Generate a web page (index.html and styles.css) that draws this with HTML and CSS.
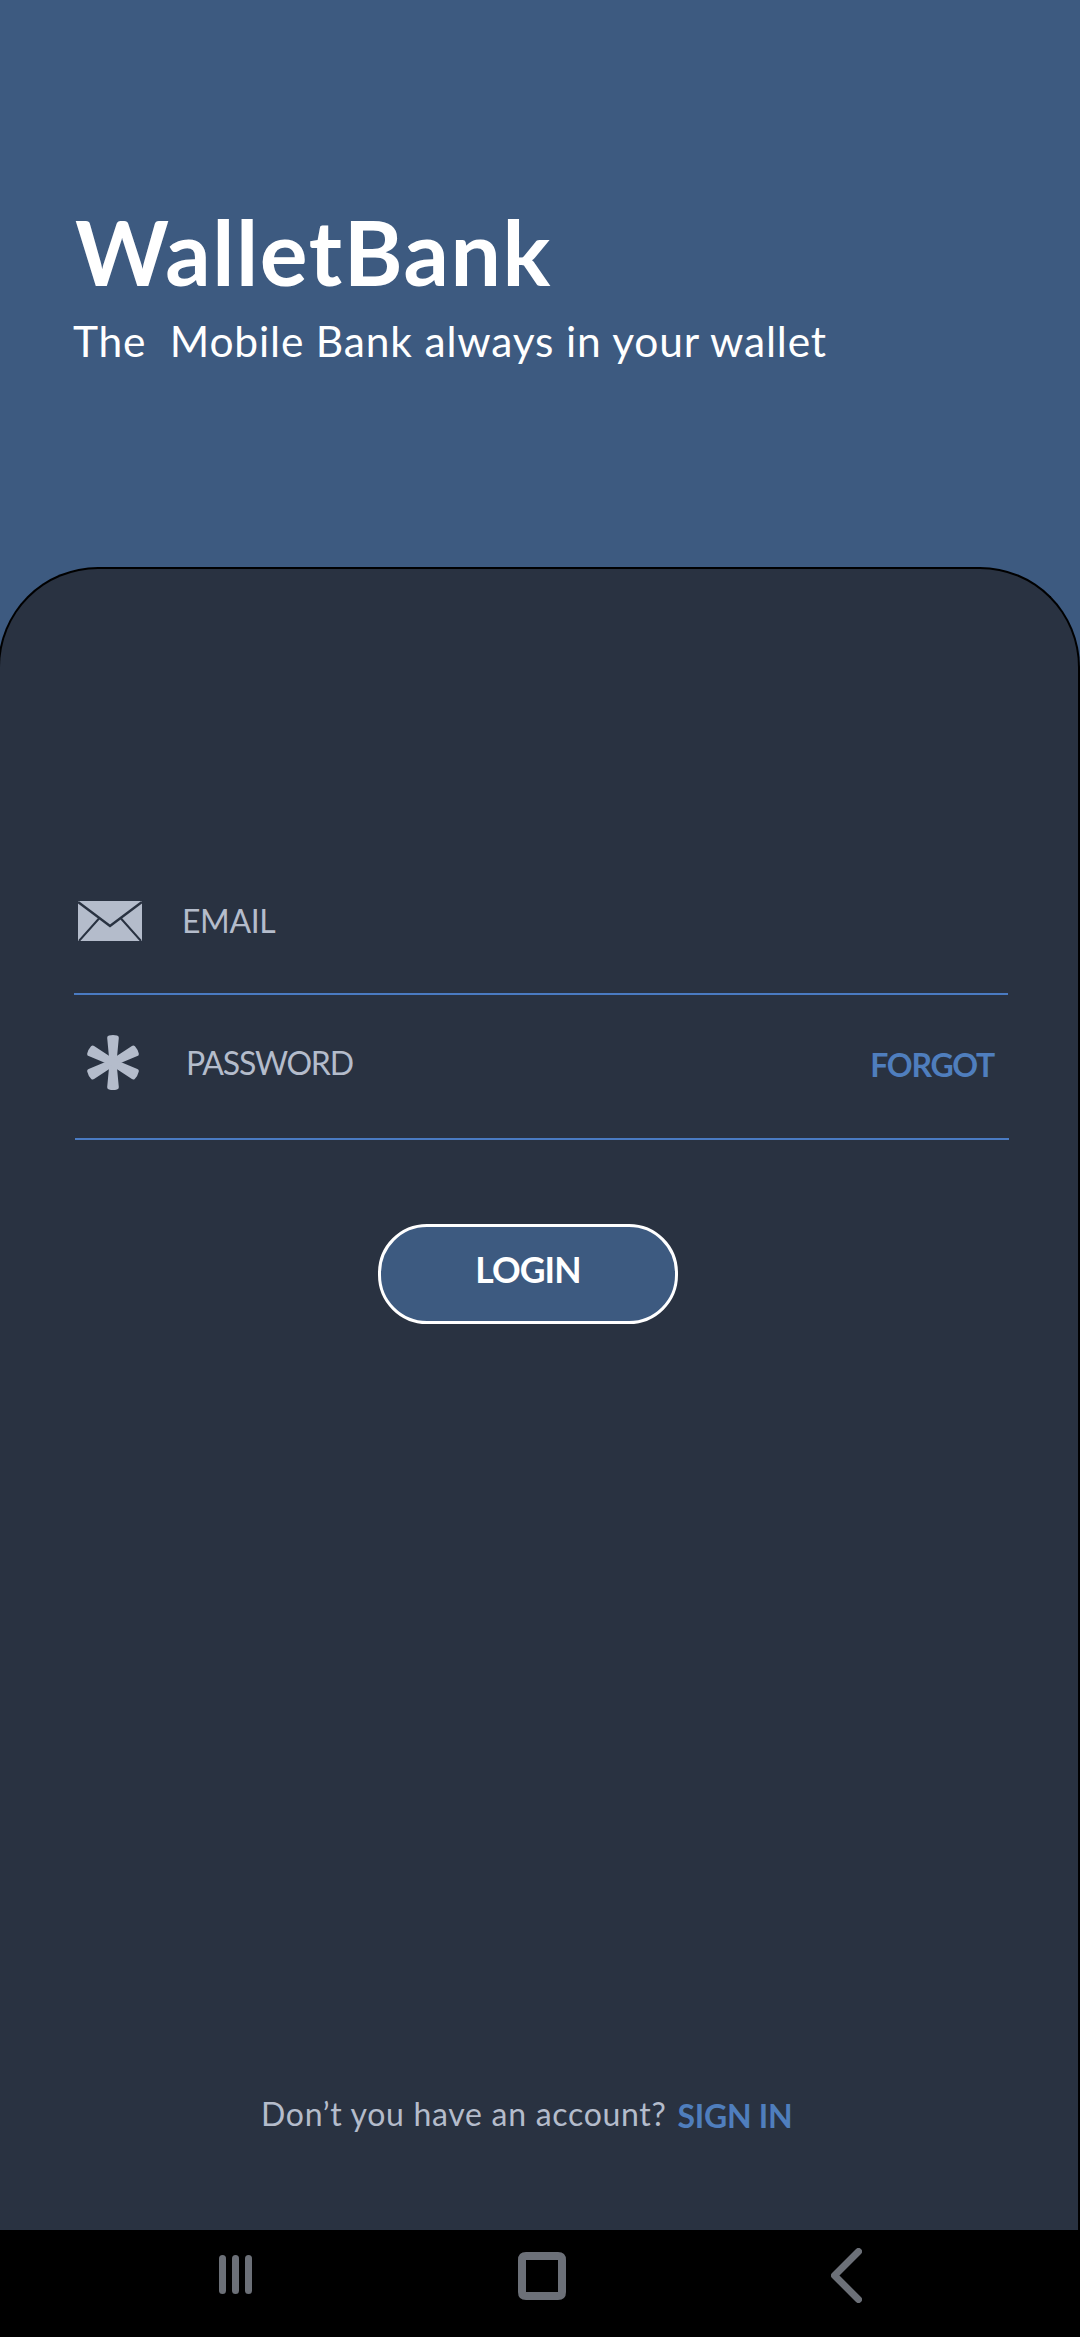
FILE: index.html
```html
<!DOCTYPE html>
<html lang="en">
<head>
<meta charset="utf-8">
<title>WalletBank</title>
<link rel="stylesheet" href="styles.css">
</head>
<body>
<div class="screen">
  <header class="brand">
    <h1 class="brand-name">WalletBank</h1>
    <p class="brand-tagline">The&nbsp; Mobile Bank always in your wallet</p>
  </header>
  <main class="card">
    <form class="form">
      <div class="field field-email">
        <svg class="icon-mail" viewBox="0 0 64 40" width="64" height="40">
          <rect width="64" height="40" fill="#b4bccb"/>
          <path d="M0 1L32 25L64 1" fill="none" stroke="#293241" stroke-width="2.500"/>
          <path d="M21 17.500L1 40M43 17.500L63 40" fill="none" stroke="#293241" stroke-width="2"/>
        </svg>
        <label class="field-label email">EMAIL</label>
      </div>
      <div class="field field-password">
        <svg class="icon-star" viewBox="0 0 52 55" width="52" height="55" fill="#b4bccb">
          <path id="spoke" d="M22 0.500Q26 -0.500 30 0.500Q32 1 31.800 3L29.500 27.500L31.800 52Q32 54 30 54.500Q26 55.500 22 54.500Q20 54 20.200 52L22.500 27.500L20.200 3Q20 1 22 0.500Z"/>
          <use href="#spoke" transform="rotate(62 26 27.5)"/>
          <use href="#spoke" transform="rotate(-62 26 27.5)"/>
        </svg>
        <label class="field-label password">PASSWORD</label>
        <a class="forgot">FORGOT</a>
      </div>
      <button class="login" type="button">LOGIN</button>
    </form>
    <p class="signup"><span class="question">Don’t you have an account?</span><a class="signin">SIGN IN</a></p>
  </main>
  <nav class="navbar">
    <svg class="nav-recent" viewBox="0 0 33 39" width="33" height="39" fill="#6c7078"><rect width="7" height="39" rx="3.500"/><rect x="13" width="7" height="39" rx="3.500"/><rect x="26" width="7" height="39" rx="3.500"/></svg>
    <svg class="nav-home" viewBox="0 0 48 48" width="48" height="48"><path fill="#6c7078" fill-rule="evenodd" d="M8 0H40Q48 0 48 8V40Q48 48 40 48H8Q0 48 0 40V8Q0 0 8 0ZM8 8V40H40V8Z"/></svg>
    <svg class="nav-back" viewBox="0 0 31 55" width="31" height="55"><path d="M27.500 3.500L3.500 27.500L27.500 51.500" fill="none" stroke="#6c7078" stroke-width="7" stroke-linecap="round" stroke-linejoin="round"/></svg>
  </nav>
</div>
</body>
</html>
```
FILE: styles.css
```css
* { box-sizing: border-box; }
body { margin: 0; background: #3d5a80; font-family: Lato, sans-serif; }
h1, p { margin: 0; }
.screen { width: 1080px; height: 2337px; display: flex; flex-direction: column; overflow: hidden; }
.brand { height: 567px; padding: 202px 0 0 73px; color: #fff; white-space: nowrap; flex: none; }
.brand-name { font-size: 89.5px; line-height: 100px; font-weight: 700; padding-left: 2px; letter-spacing: 1.6px; }
.brand-tagline { font-size: 42.5px; line-height: 60px; margin-top: 9px; letter-spacing: 0.83px; }
.card { height: 1663px; flex: none; margin-left: -2px; border: 2px solid #000; border-bottom: 0; border-radius: 100px 100px 0 0; background: #293241; padding: 280px 0 0 74px; display: flex; flex-direction: column; }
.form { display: flex; flex-direction: column; }
.field { height: 146px; width: 934px; border-bottom: 2px solid #4a7bc2; display: flex; align-items: center; color: #b4bccb; font-size: 32px; line-height: 40px; }
.icon-mail { margin-left: 4px; }
.email { margin-left: 40px; letter-spacing: -0.4px; }
.field-password { height: 145px; margin-left: 1px; padding-bottom: 8px; }
.icon-star { margin-left: 12px; }
.password { margin-left: 47px; letter-spacing: -1.25px; }
.forgot { margin-left: auto; margin-right: 15px; padding-top: 4px; font-weight: 700; letter-spacing: -1.3px; color: #4f7ebd; }
.login { width: 300px; height: 100px; margin: 84px 0 0 304px; border: 3px solid #fff; border-radius: 49px; background: #3d5a80; color: #fff; font: 700 35.5px/44px Lato, sans-serif; letter-spacing: -0.9px; padding: 0 0 9px; }
.signup { margin-top: auto; margin-bottom: 94px; padding-left: 187px; display: flex; font-size: 32px; line-height: 40px; color: #b4bccb; white-space: nowrap; }
.question { letter-spacing: 0.7px; }
.signin { margin-left: 11px; padding-top: 2px; font-weight: 700; letter-spacing: -0.3px; color: #4f7ebd; }
.navbar { height: 107px; background: #000; display: flex; padding-left: 219px; flex: none; }
.nav-recent { margin-top: 25px; }
.nav-home { margin: 22px 0 0 266px; }
.nav-back { margin: 18px 0 0 265px; }
```
